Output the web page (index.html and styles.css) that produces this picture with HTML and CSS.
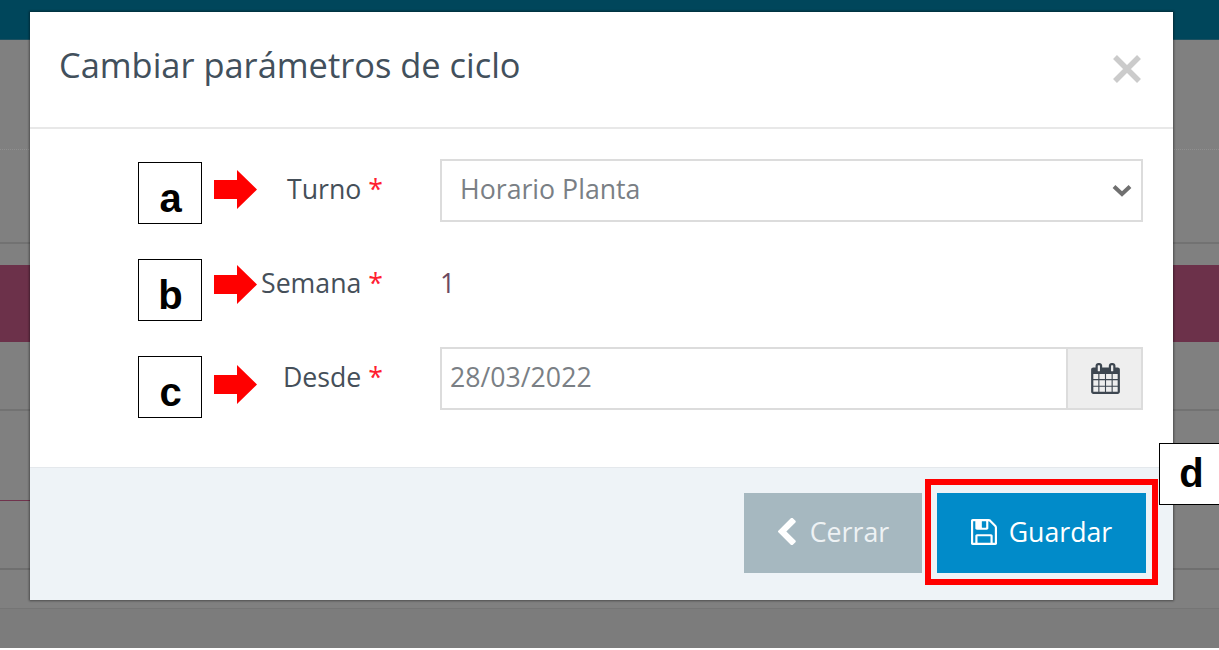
FILE: index.html
```
<!DOCTYPE html>
<html lang="es">
<head>
<meta charset="utf-8">
<title>Cambiar parámetros de ciclo</title>
<link rel="stylesheet" href="styles.css">
</head>
<body>
<div class="backdrop">
  <div class="bg-topbar"></div>
  <div class="bg-band bg-band-a"></div>
  <div class="bg-band bg-band-b"></div>
  <div class="bg-maroon"></div>
  <div class="bg-band bg-band-c"></div>
  <div class="bg-band bg-band-d"></div>
  <div class="bg-band bg-band-e"></div>
  <div class="bg-band bg-band-f"></div>
  <div class="bg-rest"></div>
</div>

<div class="modal">
  <header class="modal-header">
    <h1 class="modal-title">Cambiar parámetros de ciclo</h1>
    <svg class="close-icon" viewBox="0 0 30 30" aria-label="Cerrar"><path d="M3 3 L27 27 M27 3 L3 27"/></svg>
  </header>
  <div class="modal-body">
    <div class="field-label">Turno <span class="req">*</span></div>
    <div class="control select-control">
      <span class="control-text">Horario Planta</span>
      <svg class="chevron-down" viewBox="0 0 20 13"><path d="M2 2.5 L10 10 L18 2.5"/></svg>
    </div>
    <div class="field-label">Semana <span class="req">*</span></div>
    <div class="static-value">1</div>
    <div class="field-label">Desde <span class="req">*</span></div>
    <div class="control date-control">
      <span class="control-text">28/03/2022</span>
      <span class="addon">
        <svg class="calendar-icon" viewBox="0 0 1664 1792"><path d="M128 1664h288v-288h-288v288zm352 0h320v-288h-320v288zm-352-352h288v-320h-288v320zm352 0h320v-320h-320v320zm-352-384h288v-288h-288v288zm736 736h320v-288h-320v288zm-384-736h320v-288h-320v288zm768 736h288v-288h-288v288zm-384-352h320v-320h-320v320zm-352-864v-288q0-13-9.5-22.5t-22.5-9.5h-64q-13 0-22.5 9.5t-9.5 22.5v288q0 13 9.5 22.5t22.5 9.5h64q13 0 22.5-9.5t9.5-22.5zm736 864h288v-320h-288v320zm-384-384h320v-288h-320v288zm384 0h288v-288h-288v288zm32-480v-288q0-13-9.5-22.5t-22.5-9.5h-64q-13 0-22.5 9.5t-9.5 22.5v288q0 13 9.5 22.5t22.5 9.5h64q13 0 22.5-9.5t9.5-22.5zm384-64v1280q0 52-38 90t-90 38h-1408q-52 0-90-38t-38-90v-1280q0-52 38-90t90-38h128v-96q0-66 47-113t113-47h64q66 0 113 47t47 113v96h384v-96q0-66 47-113t113-47h64q66 0 113 47t47 113v96h128q52 0 90 38t38 90z"/></svg>
      </span>
    </div>
  </div>
  <footer class="modal-footer">
    <button class="btn btn-close" type="button">
      <svg class="btn-chevron" viewBox="109 45 1081 1574"><path d="M1171 301l-531 531 531 531q19 19 19 45t-19 45l-166 166q-19 19-45 19t-45-19l-742-742q-19-19-19-45t19-45l742-742q19-19 45-19t45 19l166 166q19 19 19 45t-19 45z"/></svg>
      <span class="btn-text">Cerrar</span>
    </button>
    <button class="btn btn-save" type="button">
      <svg class="btn-save-icon" viewBox="0 0 1536 1536"><path d="M384 1408h768v-384h-768v384zm896 0h128v-896q0-14-10-38.5t-20-34.5l-281-281q-10-10-34-20t-39-10v416q0 40-28 68t-68 28h-576q-40 0-68-28t-28-68v-416h-128v1280h128v-416q0-40 28-68t68-28h832q40 0 68 28t28 68v416zm-384-928v-320q0-13-9.5-22.5t-22.5-9.5h-192q-13 0-22.5 9.5t-9.5 22.5v320q0 13 9.5 22.5t22.5 9.5h192q13 0 22.5-9.5t9.5-22.5zm640 32v928q0 40-28 68t-68 28h-1344q-40 0-68-28t-28-68v-1344q0-40 28-68t68-28h928q40 0 88 20t76 48l280 280q28 28 48 76t20 88z"/></svg>
      <span class="btn-text">Guardar</span>
    </button>
  </footer>
</div>

<div class="note note-a">a</div>
<div class="note note-b">b</div>
<div class="note note-c">c</div>
<div class="note note-d">d</div>
<svg class="arrow arrow-a" viewBox="0 0 43 39"><polygon points="0,10 23,10 23,0 43,19.5 23,39 23,29 0,29"/></svg>
<svg class="arrow arrow-b" viewBox="0 0 43 39"><polygon points="0,10 23,10 23,0 43,19.5 23,39 23,29 0,29"/></svg>
<svg class="arrow arrow-c" viewBox="0 0 43 39"><polygon points="0,10 23,10 23,0 43,19.5 23,39 23,29 0,29"/></svg>
<div class="highlight"></div>
</body>
</html>
```
FILE: styles.css
```
* { box-sizing: border-box; }

html, body {
  margin: 0;
  height: 650px;
  overflow: hidden;
  background: #fff;
}

body {
  position: relative;
  font-family: "Open Sans", "Noto Sans", sans-serif;
}

.backdrop {
  display: flex;
  flex-direction: column;
  height: 648px;
  background: #808080;
}

.bg-topbar { height: 40px; background: #00465b; border-bottom: 1px solid #1d5060; }
.bg-band { border-bottom: 1px solid #757575; }
.bg-band-a { height: 110px; border-bottom: 1px dotted #8f8f8f; }
.bg-band-b { height: 94px; border-bottom: 2px solid #727272; }
.bg-maroon { height: 77px; margin-top: 21px; background: #6c314a; }
.bg-band-c { height: 69px; border-bottom: 2px solid #727272; }
.bg-band-d { height: 90px; border-bottom: 1px solid #70334d; }
.bg-band-e { height: 69px; border-bottom: 2px solid #6f6f6f; }
.bg-band-f { height: 39px; border-bottom: 1px solid #757575; }
.bg-rest { flex: 1; background: #7c7c7c; }

.modal {
  position: absolute;
  left: 30px;
  top: 12px;
  width: 1143px;
  height: 588px;
  display: flex;
  flex-direction: column;
  background: #fff;
  box-shadow: 0 0 2px 1px rgba(0, 0, 0, .4);
}

.modal-header {
  height: 117px;
  flex: none;
  display: flex;
  justify-content: space-between;
  padding: 30px 31px 0 29px;
  border-bottom: 2px solid #e8e8e8;
}

.modal-title {
  margin: 0;
  font-size: 34.4px;
  line-height: 46px;
  font-weight: 400;
  color: #42505c;
}

.close-icon {
  width: 30px;
  height: 30px;
  margin-top: 12px;
  fill: none;
  stroke: #cbcbcb;
  stroke-width: 5.5;
}

.modal-body {
  flex: 1;
  display: grid;
  grid-template-columns: 323px 1fr;
  grid-auto-rows: 63px;
  column-gap: 57px;
  row-gap: 31px;
  padding: 30px 30px 0;
  font-size: 26.7px;
}

.field-label {
  text-align: right;
  line-height: 60px;
  color: #454f59;
}

.req { color: #ff2030; }

.control {
  display: flex;
  align-items: center;
  border: 2px solid #dcdcdc;
  color: #7a7f85;
  background: #fff;
}

.control-text { line-height: 54px; margin-bottom: 4px; }

.select-control {
  justify-content: space-between;
  padding: 0 9px 0 18px;
}

.chevron-down {
  width: 20px;
  height: 13px;
  fill: none;
  stroke: #707070;
  stroke-width: 4;
}

.static-value {
  line-height: 60px;
  color: #6c4a60;
}

.date-control { justify-content: space-between; padding-left: 8px; }

.addon {
  align-self: stretch;
  width: 75px;
  display: flex;
  align-items: center;
  justify-content: center;
  padding-left: 1px;
  background: #eee;
  border-left: 2px solid #dcdcdc;
}

.calendar-icon { width: 29px; height: 31px; fill: #3d4650; }

.modal-footer {
  height: 133px;
  flex: none;
  display: flex;
  justify-content: flex-end;
  gap: 15px;
  padding: 25px 27px 0 0;
  background: #eef3f7;
  border-top: 1px solid #e4e8ec;
}

.btn {
  height: 80px;
  display: flex;
  align-items: center;
  justify-content: center;
  border: 0;
  color: #fff;
  font-family: inherit;
  font-size: 26.7px;
  padding: 0;
}

.btn-text { margin-bottom: 3px; }

.btn-close { width: 178px; gap: 14px; background: #a6b8c0; color: #eef2f4; }
.btn-save { width: 209px; gap: 12px; background: #018bc9; }

.btn-chevron { width: 19px; height: 27px; fill: #fff; margin-bottom: 3px; }
.btn-save-icon { width: 26px; height: 26px; fill: #fff; margin-bottom: 3px; }

.note {
  position: absolute;
  width: 64px;
  height: 62px;
  display: flex;
  align-items: center;
  justify-content: center;
  padding: 10px 0 0 1px;
  background: #fff;
  border: 1px solid #000;
  color: #000;
  font-family: "Liberation Sans", Arial, sans-serif;
  font-weight: 700;
  font-size: 40px;
  line-height: 1;
}

.note-a { left: 138px; top: 162px; }
.note-b { left: 138px; top: 259px; }
.note-c { left: 138px; top: 356px; }
.note-d { left: 1159px; top: 443px; width: 60px; padding: 0 0 2px 4px; border-right: 0; }

.arrow { position: absolute; left: 214px; width: 43px; height: 39px; fill: #ff0000; }
.arrow-a { top: 170px; }
.arrow-b { top: 265px; }
.arrow-c { top: 365px; }

.highlight {
  position: absolute;
  left: 925px;
  top: 479px;
  width: 233px;
  height: 106px;
  border: 6px solid #ff0000;
}
```
